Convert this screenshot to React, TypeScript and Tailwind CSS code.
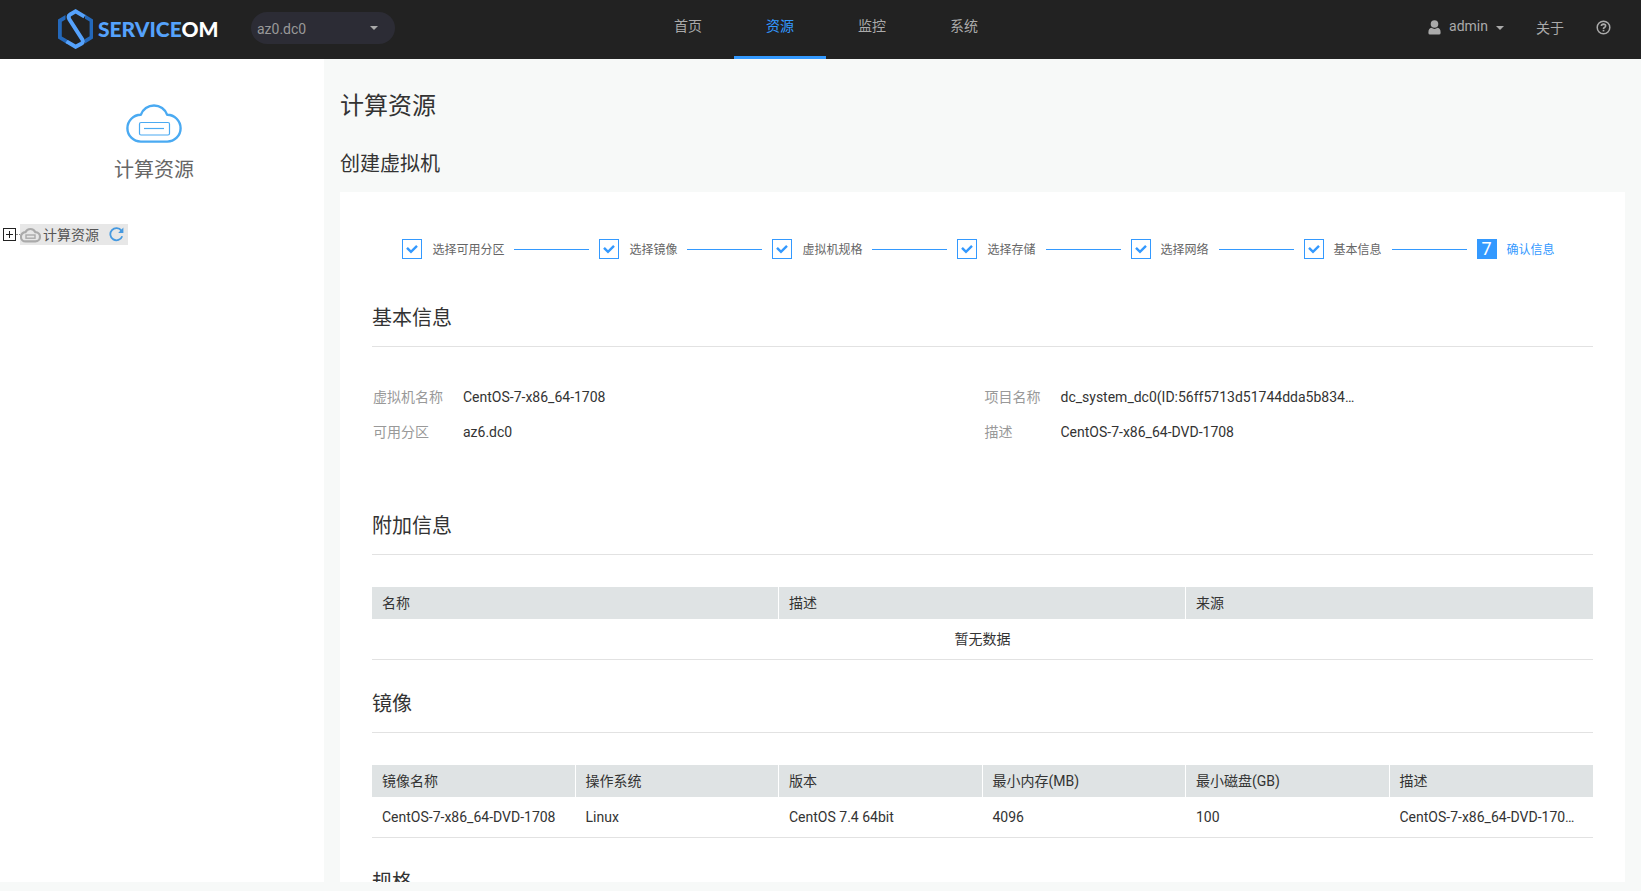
import type { ReactNode } from "react";

const navItems = [
  { label: "首页", active: false },
  { label: "资源", active: true },
  { label: "监控", active: false },
  { label: "系统", active: false },
];

const steps = ["选择可用分区", "选择镜像", "虚拟机规格", "选择存储", "选择网络", "基本信息", "确认信息"];

const basicInfo = [
  [
    { label: "虚拟机名称", value: "CentOS-7-x86_64-1708" },
    { label: "可用分区", value: "az6.dc0" },
  ],
  [
    { label: "项目名称", value: "dc_system_dc0(ID:56ff5713d51744dda5b834…" },
    { label: "描述", value: "CentOS-7-x86_64-DVD-1708" },
  ],
];

function LogoMark() {
  return (
    <svg width="36" height="40" viewBox="0 0 36 40" fill="none" aria-hidden="true">
      <path d="M7.5 6L0 10.6V29.6L9 35V30.6L3.8 27.4V12.8L7.5 10.4Z" fill="#2468ba" />
      <path d="M27 5.4L35 10.4V29.4L27 34.4V30L31.6 27.2V12.6L27 9.8Z" fill="#2468ba" />
      <path
        d="M26.5 7.6L17.6 2.3L12.2 5.4Q9.8 7 11.2 10L24.6 31Q25.6 33.4 23.2 34.8L17.6 37.8L8.5 32.4"
        stroke="#55a2fc"
        strokeWidth="4"
      />
    </svg>
  );
}

function CloudIcon({ className }: { className: string }) {
  return (
    <svg className={className} viewBox="0 0 56 40" fill="none" stroke="currentColor" aria-hidden="true">
      <path
        d="M14.8 38.6A13.4 13.4 0 0 1 14.8 11.8A14 14 0 0 1 41.2 11.8A13.4 13.4 0 0 1 41.2 38.6Z"
        strokeWidth="2.4"
        strokeLinejoin="round"
      />
      <rect x="13.5" y="19.5" width="30" height="12.5" rx="1.5" strokeWidth="1.2" />
      <path d="M18 25.5H38" strokeWidth="1.2" />
    </svg>
  );
}

function SmallCloudIcon() {
  return (
    <svg width="21" height="16" viewBox="0 0 21 16" fill="none" stroke="#aaa" aria-hidden="true">
      <path
        d="M5.6 14.4A4.6 4.6 0 0 1 5.4 5.2A5.5 5.5 0 0 1 15.4 5.2A4.6 4.6 0 0 1 15.4 14.4Z"
        strokeWidth="2.2"
        strokeLinejoin="round"
      />
      <rect x="6" y="8" width="9" height="3.2" strokeWidth="1.4" />
    </svg>
  );
}

function RefreshIcon() {
  return (
    <svg width="15" height="15" viewBox="0 0 15 15" fill="none" aria-hidden="true">
      <path d="M12.4 3.6A6.1 6.1 0 1 0 13.2 9.2" stroke="#4599e0" strokeWidth="1.8" />
      <path d="M14.4 0.6V5.9H9.2Z" fill="#4599e0" />
    </svg>
  );
}

function Caret() {
  return (
    <svg width="8" height="4" viewBox="0 0 8 4" fill="currentColor" aria-hidden="true">
      <path d="M0 0H8L4 4Z" />
    </svg>
  );
}

function UserIcon() {
  return (
    <svg width="13" height="15" viewBox="0 0 13 15" fill="currentColor" aria-hidden="true">
      <circle cx="6.5" cy="4" r="3.8" />
      <path d="M3.4 7.8Q6.5 10 9.6 7.8Q12.6 8.4 12.6 12.4V13Q12.6 14.6 11 14.6H2Q0.4 14.6 0.4 13V12.4Q0.4 8.4 3.4 7.8Z" />
    </svg>
  );
}

function HelpIcon() {
  return (
    <svg width="15" height="15" viewBox="0 0 15 15" fill="none" stroke="currentColor" aria-hidden="true">
      <circle cx="7.5" cy="7.5" r="6.3" strokeWidth="1.5" />
      <path d="M5.4 6Q5.5 4.2 7.5 4.2Q9.7 4.3 9.6 6Q9.5 7 8.4 7.5Q7.5 8 7.5 9" strokeWidth="1.7" />
      <path d="M7.5 9.8V11.4" strokeWidth="1.7" />
    </svg>
  );
}

function Header() {
  return (
    <header className="flex h-[59px] shrink-0 items-center bg-[#222] text-sm text-[#aaa]">
      <a href="#home" className="mb-0.5 ml-[58px] flex w-[193px] items-center gap-1">
        <LogoMark />
        <span className="font-['Lato',sans-serif] text-[21px] leading-7 font-black text-[#55a2fc]">
          SERVICE<span className="text-white">OM</span>
        </span>
      </a>
      <label className="relative mb-1 flex items-center">
        <span className="sr-only">数据中心</span>
        <select className="h-8 w-36 appearance-none rounded-full bg-[#2c2c35] pt-0.5 pl-1.5 text-sm leading-5 text-[#999]">
          <option>az0.dc0</option>
        </select>
        <span className="pointer-events-none absolute right-[17px]">
          <Caret />
        </span>
      </label>
      <nav className="ml-[247px] flex self-stretch">
        {navItems.map((item) => (
          <a
            key={item.label}
            href={"#" + item.label}
            className={
              item.active
                ? "flex w-[92px] justify-center border-b-[3px] border-[#39f] pt-4 leading-5 text-[#39f]"
                : "flex w-[92px] justify-center border-b-[3px] border-transparent pt-4 leading-5"
            }
          >
            {item.label}
          </a>
        ))}
      </nav>
      <div className="mr-[30px] mb-1 ml-auto flex items-center gap-8">
        <button type="button" className="flex items-center gap-2">
          <UserIcon />
          <span className="pb-1">admin</span>
          <Caret />
        </button>
        <a href="#about">关于</a>
        <button type="button" aria-label="帮助">
          <HelpIcon />
        </button>
      </div>
    </header>
  );
}

function Sidebar() {
  return (
    <aside className="w-[324px] shrink-0 bg-white">
      <div className="flex flex-col items-center pt-11 pr-4 text-[#4aaaf2]">
        <CloudIcon className="h-10 w-14" />
        <div className="mt-[13px] text-xl leading-7 text-[#666]">计算资源</div>
      </div>
      <div className="mt-10 flex h-[21px] items-center pl-[3px]">
        <button
          type="button"
          aria-label="展开"
          className="flex size-[13px] items-center justify-center border border-[#222] text-[#222]"
        >
          <svg width="7" height="7" viewBox="0 0 7 7" stroke="currentColor" aria-hidden="true">
            <path d="M3.5 0V7M0 3.5H7" />
          </svg>
        </button>
        <span className="w-1 border-t border-dotted border-[#888]" />
        <div className="flex h-full items-center bg-[#e7e7e7] pr-1">
          <SmallCloudIcon />
          <a href="#compute" className="ml-0.5 text-sm leading-5 text-[#555]">
            计算资源
          </a>
          <button type="button" aria-label="刷新" className="ml-2.5">
            <RefreshIcon />
          </button>
        </div>
      </div>
    </aside>
  );
}

function Steps() {
  return (
    <ol className="flex h-5 items-center justify-center pl-0.5 text-xs text-[#666]">
      {steps.map((step, i) => {
        const current = i === steps.length - 1;
        return (
          <li key={step} className="flex h-5 items-center">
            {current ? (
              <span className="flex size-5 items-center justify-center bg-[#39f] text-lg leading-5 text-white">
                {i + 1}
              </span>
            ) : (
              <span className="flex size-5 items-center justify-center border border-[#39f]">
                <svg width="12" height="10" viewBox="0 0 12 10" fill="none" aria-hidden="true">
                  <path d="M1 3.8L5 7.8L11 1.8" stroke="#39f" strokeWidth="2.4" />
                </svg>
              </span>
            )}
            <span className={current ? "mx-2.5 pt-0.5 leading-5 text-[#39f]" : "mx-2.5 pt-0.5 leading-5"}>{step}</span>
            {!current && <span className="mr-2.5 w-[75px] border-t border-[#39f]" />}
          </li>
        );
      })}
    </ol>
  );
}

function Section({ title, className, children }: { title: string; className: string; children?: ReactNode }) {
  return (
    <section className={className}>
      <h3 className="border-b border-[#e2e2e2] pb-3.5 text-xl leading-7">{title}</h3>
      <div className="mt-8">{children}</div>
    </section>
  );
}

function DataTable({ columns, rows }: { columns: string[]; rows: string[][] }) {
  return (
    <table className="w-full table-fixed border-separate border-spacing-0 text-left text-sm leading-5">
      <thead>
        <tr className="h-8 bg-[#dfe3e4]">
          {columns.map((column) => (
            <th key={column} className="border-r border-white px-2.5 py-0 font-normal last:border-r-0">
              {column}
            </th>
          ))}
        </tr>
      </thead>
      <tbody>
        {rows.length === 0 && (
          <tr className="h-[41px]">
            <td colSpan={columns.length} className="border-b border-[#e2e2e2] p-0 text-center">
              暂无数据
            </td>
          </tr>
        )}
        {rows.map((row) => (
          <tr key={row[0]} className="h-[41px]">
            {row.map((cell, i) => (
              <td key={columns[i]} className="truncate border-b border-[#e2e2e2] px-2.5 py-0">
                {cell}
              </td>
            ))}
          </tr>
        ))}
      </tbody>
    </table>
  );
}

export default function App() {
  return (
    <div className="flex h-screen flex-col bg-[#f7f9f8] pb-[9px] font-['Roboto','Noto_Sans_CJK_SC',sans-serif] text-[#333]">
      <Header />
      <div className="flex min-h-0 flex-1">
        <Sidebar />
        <main className="flex min-w-0 flex-1 flex-col overflow-hidden px-4 pt-[31px]">
          <h1 className="text-2xl leading-8">计算资源</h1>
          <h2 className="mt-7 text-xl leading-7">创建虚拟机</h2>
          <div className="mt-3.5 min-h-0 flex-1 overflow-hidden bg-white px-8 pt-[47px]">
            <Steps />
            <Section title="基本信息" className="mt-[45px]">
              <div className="grid grid-cols-2 text-sm">
                {basicInfo.map((group, i) => (
                  <dl key={i} className={i === 0 ? "pl-px" : "pl-0.5"}>
                    {group.map((entry) => (
                      <div key={entry.label} className="flex h-[35px] items-center">
                        <dt className={i === 0 ? "w-[90px] text-[#999]" : "w-[76px] text-[#999]"}>{entry.label}</dt>
                        <dd>{entry.value}</dd>
                      </div>
                    ))}
                  </dl>
                ))}
              </div>
            </Section>
            <Section title="附加信息" className="mt-[63px]">
              <DataTable columns={["名称", "描述", "来源"]} rows={[]} />
            </Section>
            <Section title="镜像" className="mt-[30px]">
              <DataTable
                columns={["镜像名称", "操作系统", "版本", "最小内存(MB)", "最小磁盘(GB)", "描述"]}
                rows={[
                  ["CentOS-7-x86_64-DVD-1708", "Linux", "CentOS 7.4 64bit", "4096", "100", "CentOS-7-x86_64-DVD-170…"],
                ]}
              />
            </Section>
            <Section title="规格" className="mt-[30px]" />
          </div>
        </main>
      </div>
    </div>
  );
}
